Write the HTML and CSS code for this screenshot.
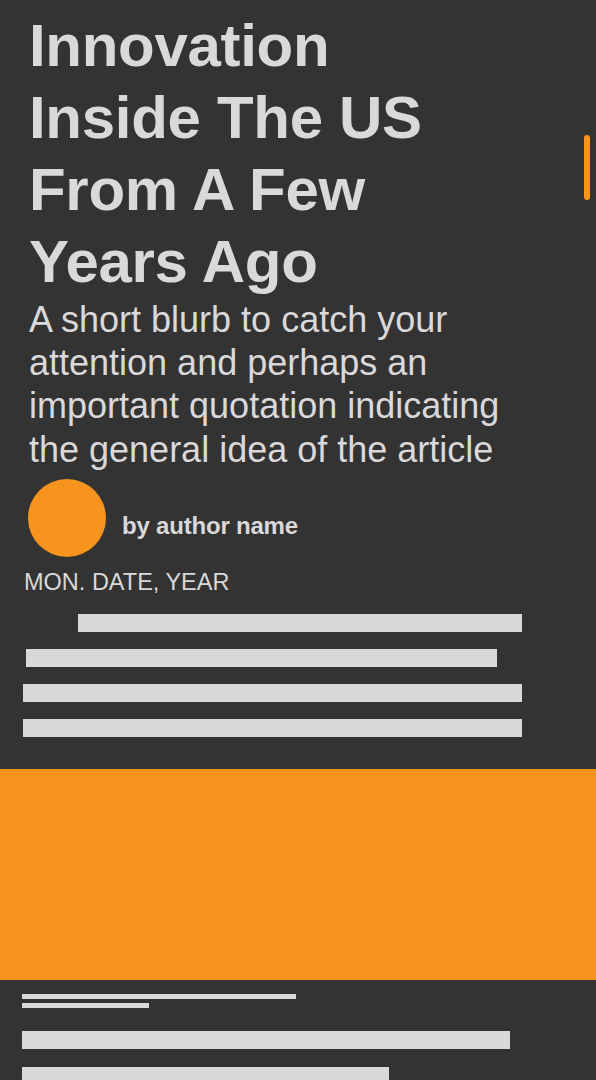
FILE: index.html
```html
<!DOCTYPE html>
<html lang="en">
<head>
<meta charset="utf-8">
<title>Article</title>
<link rel="stylesheet" href="styles.css">
</head>
<body>
<header class="hero">
  <h1 class="title">Innovation Inside The US From A Few Years Ago</h1>
  <p class="blurb">A short blurb to catch your attention and perhaps an important quotation indicating the general idea of the article</p>
  <div class="author">
    <span class="avatar"></span>
    <span class="name">by author name</span>
  </div>
  <div class="date">MON. DATE, YEAR</div>
  <div class="lines">
    <div class="bar bar-1"></div>
    <div class="bar bar-2"></div>
    <div class="bar bar-3"></div>
    <div class="bar bar-4"></div>
  </div>
</header>
<div class="banner"></div>
<section class="body">
  <div class="caption">
    <div class="thin thin-1"></div>
    <div class="thin thin-2"></div>
  </div>
  <div class="paras">
    <div class="bar bar-5"></div>
    <div class="bar bar-6"></div>
  </div>
</section>
<div class="scroll-thumb"></div>
</body>
</html>
```
FILE: styles.css
```css
html, body {
  margin: 0;
  padding: 0;
  background: #333333;
}
body {
  font-family: "Liberation Sans", Arial, sans-serif;
  color: #dad8d9;
  height: 1080px;
  overflow: hidden;
}
.hero {
  padding-top: 10px;
  display: flex;
  flex-direction: column;
}
.title {
  margin: 0 0 0 29px;
  width: 440px;
  font-size: 60px;
  line-height: 72px;
  font-weight: 700;
  letter-spacing: -0.3px;
}
.blurb {
  margin: 0 0 0 29px;
  width: 500px;
  font-size: 36px;
  line-height: 43.2px;
  font-weight: 400;
}
.author {
  margin: 8px 0 0 28px;
  display: flex;
  align-items: center;
  gap: 16px;
}
.avatar {
  width: 78px;
  height: 78px;
  border-radius: 50%;
  background: #f7941e;
  flex: none;
}
.name {
  padding-top: 17px;
  font-size: 24px;
  font-weight: 700;
  letter-spacing: -0.2px;
}
.date {
  margin: 12px 0 0 24px;
  font-size: 23.5px;
  font-weight: 400;
}
.lines {
  margin-top: 18px;
  display: flex;
  flex-direction: column;
  gap: 17px;
}
.bar {
  height: 18px;
  background: #d9d7d8;
}
.bar-1 { margin-left: 78px; width: 444px; }
.bar-2 { margin-left: 26px; width: 471px; }
.bar-3 { margin-left: 23px; width: 499px; }
.bar-4 { margin-left: 23px; width: 499px; }
.banner {
  margin-top: 32px;
  height: 211px;
  background: #f7941e;
}
.body {
  padding: 14px 0 0 22px;
}
.caption {
  display: flex;
  flex-direction: column;
  gap: 4px;
}
.thin {
  height: 5px;
  background: #d9d7d8;
}
.thin-1 { width: 274px; }
.thin-2 { width: 127px; }
.paras {
  margin-top: 23px;
  display: flex;
  flex-direction: column;
  gap: 18px;
}
.bar-5 { width: 488px; }
.bar-6 { width: 367px; }
.scroll-thumb {
  position: fixed;
  top: 135px;
  left: 584px;
  width: 6px;
  height: 65px;
  border-radius: 3px;
  background: #f7941e;
}
```
